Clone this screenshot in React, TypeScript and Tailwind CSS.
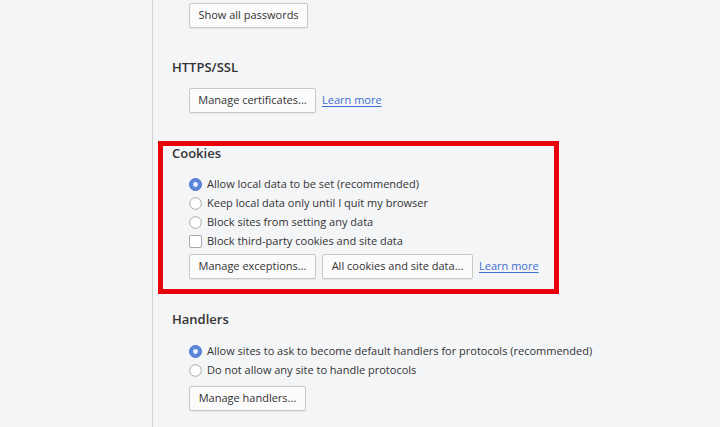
import React from "react";

const font = { fontFamily: '"Open Sans", "Noto Sans", sans-serif' };

function Btn({ children, w }: { children: React.ReactNode; w: string }) {
  return (
    <button
      className={`h-[25px] ${w} shrink-0 rounded-[2px] border border-[#c8c8c8] bg-[#fbfbfb] text-[11px] text-[#333] shadow-[0_1px_0_rgba(0,0,0,0.06)] flex items-center justify-center`}
    >
      {children}
    </button>
  );
}

function Radio({ checked }: { checked?: boolean }) {
  return (
    <svg width="13" height="13" viewBox="0 0 13 13" className="shrink-0">
      {checked ? (
        <>
          <circle cx="6.5" cy="6.5" r="6" fill="#5b86d9" stroke="#4a74c8" strokeWidth="1" />
          <circle cx="6.5" cy="6.5" r="2.4" fill="#eef3ff" />
        </>
      ) : (
        <circle cx="6.5" cy="6.5" r="5.8" fill="#fff" stroke="#a9a9a9" strokeWidth="1" />
      )}
    </svg>
  );
}

function Check() {
  return <div className="w-[13px] h-[13px] shrink-0 rounded-[2px] border border-[#a9a9a9] bg-white" />;
}

function Row({ icon, label }: { icon: React.ReactNode; label: string }) {
  return (
    <div className="h-[19px] flex items-center gap-[5px] text-[11px] text-[#333]">
      {icon}
      <span>{label}</span>
    </div>
  );
}

function Link() {
  return <span className="text-[11px] text-[#3f6fcf] underline underline-offset-2">Learn more</span>;
}

export default function App() {
  return (
    <div className="w-[720px] h-[427px] overflow-hidden bg-[#f4f5f7] flex" style={font}>
      <div className="w-[153px] h-full border-r border-[#d2d2d2] shrink-0" />
      <div className="flex-1 flex flex-col">
        <div className="pl-[36px] pt-[3px] flex">
          <Btn w="w-[119px]">Show all passwords</Btn>
        </div>
        <div className="pl-[19px] mt-[31px] h-[17px] flex items-center text-[13px] font-semibold text-[#333]">HTTPS/SSL</div>
        <div className="pl-[36px] mt-[12px] flex items-center gap-[6px]">
          <Btn w="w-[127px]">Manage certificates...</Btn>
          <Link />
        </div>
        <div className="ml-[5px] mt-[28px] w-[401px] h-[153px] border-[5px] border-[#e8000b] flex flex-col">
          <div className="pl-[9px] h-[16px] flex items-center text-[13px] font-semibold text-[#333]">Cookies</div>
          <div className="pl-[26px] mt-[13px] flex flex-col">
            <Row icon={<Radio checked />} label="Allow local data to be set (recommended)" />
            <Row icon={<Radio />} label="Keep local data only until I quit my browser" />
            <Row icon={<Radio />} label="Block sites from setting any data" />
            <Row icon={<Check />} label="Block third-party cookies and site data" />
            <div className="mt-[3px] flex items-center gap-[6px]">
              <Btn w="w-[127px]">Manage exceptions...</Btn>
              <Btn w="w-[151px]">All cookies and site data...</Btn>
              <Link />
            </div>
          </div>
        </div>
        <div className="pl-[19px] mt-[17px] h-[17px] flex items-center text-[13px] font-semibold text-[#333]">Handlers</div>
        <div className="pl-[36px] mt-[14px] flex flex-col">
          <Row icon={<Radio checked />} label="Allow sites to ask to become default handlers for protocols (recommended)" />
          <Row icon={<Radio />} label="Do not allow any site to handle protocols" />
          <div className="mt-[6px] flex">
            <Btn w="w-[117px]">Manage handlers...</Btn>
          </div>
        </div>
      </div>
    </div>
  );
}
